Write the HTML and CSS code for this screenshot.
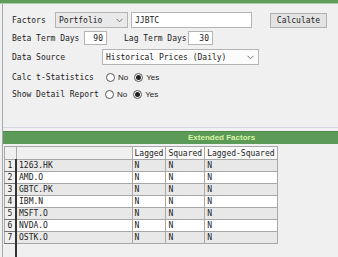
FILE: index.html
```html
<!DOCTYPE html>
<html lang="en">
<head>
  <meta charset="UTF-8">
  <title>Extended Factors</title>
  <link rel="stylesheet" href="styles.css">
</head>
<body>
  <div class="topbar"></div>
  <div class="window">
    <form class="settings">
      <div class="row row-factors">
        <label class="lbl lbl-factors">Factors</label>
        <div class="combo combo-small">
          <span class="combo-text">Portfolio</span>
          <span class="combo-arrow"><svg width="7" height="5" viewBox="0 0 7 5"><path d="M0.5 0.8 L3.5 3.8 L6.5 0.8" fill="none" stroke="#777" stroke-width="1"/></svg></span>
        </div>
        <input class="field field-name" type="text" value="JJBTC">
        <button class="btn" type="button">Calculate</button>
      </div>

      <div class="row row-terms">
        <label class="lbl lbl-beta">Beta Term Days</label>
        <input class="field field-num field-beta" type="text" value="90">
        <label class="lbl lbl-lag">Lag Term Days</label>
        <input class="field field-num field-lag" type="text" value="30">
      </div>

      <div class="row row-source">
        <label class="lbl lbl-source">Data Source</label>
        <div class="combo combo-wide">
          <span class="combo-text">Historical Prices (Daily)</span>
          <span class="combo-arrow"><svg width="7" height="5" viewBox="0 0 7 5"><path d="M0.5 0.8 L3.5 3.8 L6.5 0.8" fill="none" stroke="#777" stroke-width="1"/></svg></span>
        </div>
      </div>

      <div class="row row-radio row-calc">
        <label class="lbl lbl-calc">Calc t-Statistics</label>
        <span class="radio"></span><span class="radio-text">No</span>
        <span class="radio checked"></span><span class="radio-text">Yes</span>
      </div>

      <div class="row row-radio row-detail">
        <label class="lbl lbl-detail">Show Detail Report</label>
        <span class="radio"></span><span class="radio-text">No</span>
        <span class="radio checked"></span><span class="radio-text">Yes</span>
      </div>
    </form>

    <div class="section-title">Extended Factors</div>

    <div class="grid-area">
      <table class="factors">
        <thead>
          <tr>
            <th class="rownum"></th>
            <th class="name"></th>
            <th class="col-lag">Lagged</th>
            <th class="col-sq">Squared</th>
            <th class="col-lsq">Lagged-Squared</th>
          </tr>
        </thead>
        <tbody>
          <tr class="odd"><td class="rownum">1</td><td>1263.HK</td><td>N</td><td>N</td><td>N</td></tr>
          <tr><td class="rownum">2</td><td>AMD.O</td><td>N</td><td>N</td><td>N</td></tr>
          <tr class="odd"><td class="rownum">3</td><td>GBTC.PK</td><td>N</td><td>N</td><td>N</td></tr>
          <tr><td class="rownum">4</td><td>IBM.N</td><td>N</td><td>N</td><td>N</td></tr>
          <tr class="odd"><td class="rownum">5</td><td>MSFT.O</td><td>N</td><td>N</td><td>N</td></tr>
          <tr><td class="rownum">6</td><td>NVDA.O</td><td>N</td><td>N</td><td>N</td></tr>
          <tr class="odd"><td class="rownum">7</td><td>OSTK.O</td><td>N</td><td>N</td><td>N</td></tr>
        </tbody>
      </table>
      <div class="grid-filler"></div>
    </div>
  </div>
</body>
</html>
```

FILE: styles.css
```css
html, body {
  height: 100%;
}
body {
  margin: 0;
  background-color: #f0f0f0;
  font-family: "DejaVu Sans Mono", "Liberation Mono", monospace;
  font-size: 8px;
  color: #222;
  display: flex;
  flex-direction: column;
  overflow: hidden;
}
.topbar {
  height: 3px;
  background-color: #5f9c5b;
  border-bottom: 1px solid #a9cfa5;
}
.window {
  flex: 1;
  margin-left: 2px;
  border-left: 1px solid #a0a8b0;
  display: flex;
  flex-direction: column;
}
.settings {
  height: 124px;
  padding: 8px 0 0 9px;
  box-sizing: border-box;
  border-bottom: 1px solid #d4d8de;
}
.row {
  display: flex;
  align-items: center;
}
.lbl {
  flex: none;
}
.row-factors {
  height: 16px;
}
.lbl-factors {
  width: 43px;
}
.combo {
  display: flex;
  align-items: center;
  box-sizing: border-box;
  height: 16px;
  border: 1px solid #b4b4b4;
}
.combo-small {
  width: 73px;
  background-color: #e9e9e9;
}
.combo-wide {
  width: 157px;
  background-color: #fbfbfb;
}
.combo-text {
  flex: 1;
  padding-left: 3px;
  white-space: nowrap;
  overflow: hidden;
}
.combo-arrow {
  width: 15px;
  height: 14px;
  display: flex;
  align-items: center;
  justify-content: center;
}
.field {
  box-sizing: border-box;
  height: 16px;
  border: 1px solid #b4b4b4;
  background-color: #fff;
  font-family: inherit;
  font-size: 8px;
  color: #222;
  padding: 0 3px;
  margin: 0;
}
.field-name {
  width: 121px;
  margin-left: 3px;
}
.btn {
  width: 57px;
  height: 15px;
  margin-left: 18px;
  padding: 0;
  border: 1px solid #b0b0b0;
  background-color: #e3e3e3;
  font-family: inherit;
  font-size: 8px;
  color: #222;
}
.row-terms {
  height: 14px;
  margin-top: 3px;
}
.field-num {
  height: 14px;
  text-align: right;
}
.lbl-beta {
  width: 72px;
}
.field-beta {
  width: 23px;
}
.lbl-lag {
  width: 64px;
  margin-left: 17px;
}
.field-lag {
  width: 25px;
}
.row-source {
  height: 16px;
  margin-top: 4px;
}
.lbl-source {
  width: 90px;
}
.row-radio {
  height: 12px;
}
.row-calc {
  margin-top: 6px;
}
.row-detail {
  margin-top: 5px;
}
.lbl-calc {
  width: 94px;
}
.lbl-detail {
  width: 93px;
}
.radio {
  width: 9px;
  height: 9px;
  box-sizing: border-box;
  border: 1px solid #555;
  border-radius: 50%;
  background-color: #fff;
  display: flex;
  align-items: center;
  justify-content: center;
}
.radio.checked::after {
  content: "";
  width: 5px;
  height: 5px;
  border-radius: 50%;
  background-color: #222;
}
.radio-text {
  font-family: "Liberation Sans", Arial, sans-serif;
  font-size: 8px;
  margin: 0 6px 0 3px;
}
.section-title {
  margin-top: 3px;
  height: 12px;
  line-height: 12px;
  background-color: #5b9a57;
  border-top: 1px solid #4d8a49;
  color: #d9f4a6;
  font-family: "Liberation Sans", Arial, sans-serif;
  font-weight: bold;
  font-size: 8px;
  padding-left: 185px;
}
.grid-area {
  flex: 1;
  display: flex;
  flex-direction: column;
  align-items: flex-start;
  padding-top: 2px;
  padding-left: 1px;
}
.factors {
  border-collapse: collapse;
  font-size: 8px;
}
.factors th,
.factors td {
  height: 11px;
  padding: 0 2px;
  border: 1px solid #a8a8a8;
  text-align: left;
  font-weight: normal;
  white-space: nowrap;
  line-height: 11px;
}
.factors th {
  height: 12px;
  background-color: #f9f9f9;
}
.factors th.rownum,
.factors th.name {
  background-color: #f0f0f0;
}
.factors td {
  background-color: #fff;
}
.factors tr.odd td {
  background-color: #e8e8e8;
}
.factors .rownum {
  width: 10px;
  padding: 0;
}
.factors td.rownum,
.factors tr.odd td.rownum {
  text-align: center;
  background-color: #f0f0f0;
  border-bottom: 1px solid #777;
  border-right: 2px solid #333;
}
.factors .name {
  width: 111px;
}
.col-lag {
  width: 27px;
}
.col-sq {
  width: 33px;
}
.col-lsq {
  width: 67px;
}
.grid-filler {
  flex: 1;
  width: 0;
  margin-left: 11px;
  border-left: 2px solid #333;
}
```
